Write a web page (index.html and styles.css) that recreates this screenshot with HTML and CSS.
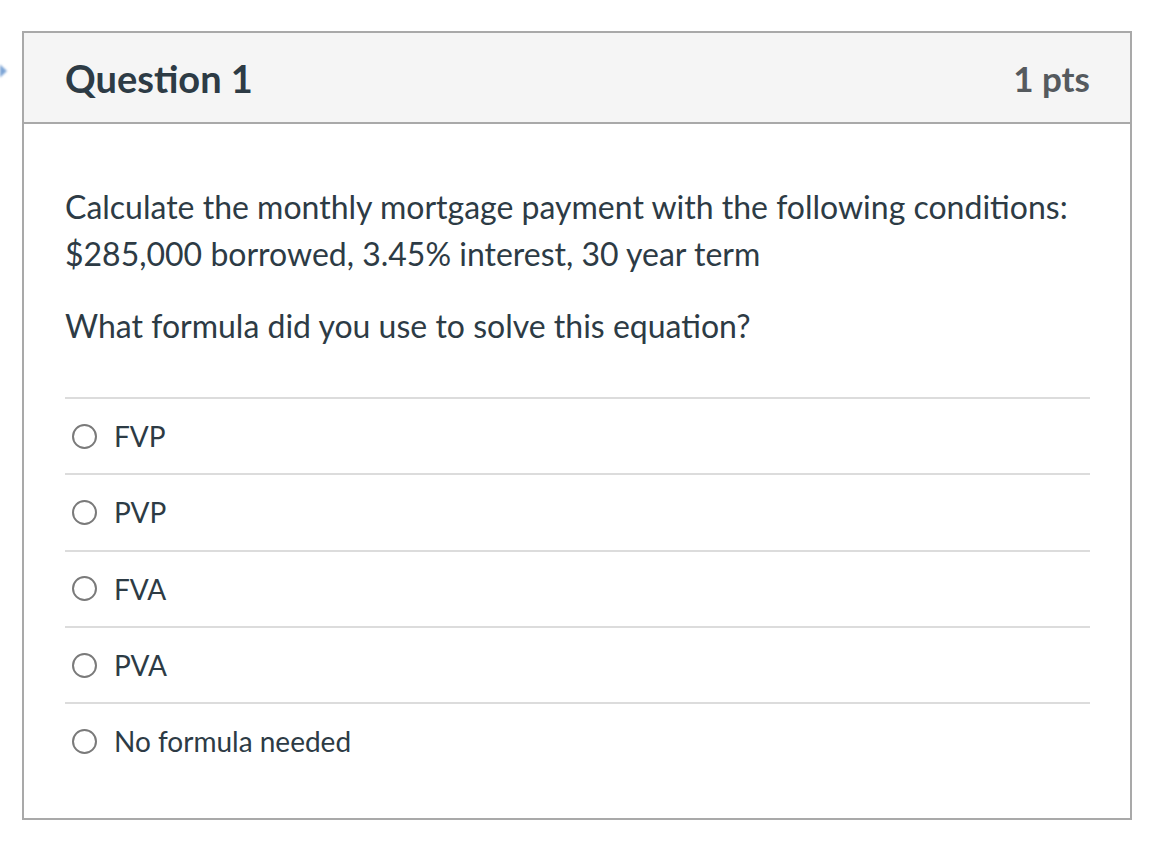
FILE: index.html
```html
<!DOCTYPE html>
<html lang="en">
<head>
<meta charset="utf-8">
<title>Question 1</title>
<link rel="stylesheet" href="styles.css">
</head>
<body>
<div class="page">
  <svg class="flag" width="8" height="26" viewBox="0 0 8 26" aria-hidden="true">
    <path d="M-6 1 L7 13 L-6 25 Z" fill="#7da5d6"/>
  </svg>
  <div class="card">
    <div class="card-header">
      <h2 class="title">Question 1</h2>
      <span class="pts">1 pts</span>
    </div>
    <div class="card-body">
      <p class="q">Calculate the monthly mortgage payment with the following conditions: $285,000 borrowed, 3.45% interest, 30 year term</p>
      <p class="q q2">What formula did you use to solve this equation?</p>
      <div class="answers">
        <label class="answer"><span class="radio"></span><span class="answer-text">FVP</span></label>
        <label class="answer"><span class="radio"></span><span class="answer-text">PVP</span></label>
        <label class="answer"><span class="radio"></span><span class="answer-text">FVA</span></label>
        <label class="answer"><span class="radio"></span><span class="answer-text">PVA</span></label>
        <label class="answer"><span class="radio"></span><span class="answer-text">No formula needed</span></label>
      </div>
    </div>
  </div>
</div>
</body>
</html>
```

FILE: styles.css
```css
html, body {
  margin: 0;
  padding: 0;
  background: #ffffff;
}
body {
  font-family: Lato, "Open Sans", "Liberation Sans", sans-serif;
  color: #2d3b45;
}
.page {
  position: relative;
  padding: 31px 30px 0 22px;
}
.flag {
  position: absolute;
  left: 0;
  top: 58px;
  filter: blur(1px);
}
.card {
  width: 1106px;
  border: 2px solid #a9a9a9;
}
.card-header {
  display: flex;
  align-items: center;
  justify-content: space-between;
  height: 89px;
  padding: 0 40px 0 41px;
  background: #f5f5f5;
  border-bottom: 2px solid #a9a9a9;
}
.title {
  margin: 0;
  font-size: 38px;
  font-weight: 700;
  color: #2d3b45;
}
.pts {
  font-size: 35px;
  font-weight: 700;
  color: #555a5e;
}
.card-body {
  padding: 59px 40px 40px 41px;
}
.q {
  margin: 0;
  font-size: 32px;
  line-height: 47px;
  color: #2d3b45;
}
.q2 {
  margin-top: 25px;
}
.answers {
  margin-top: 48px;
}
.answer {
  display: flex;
  align-items: center;
  height: 74.3px;
  border-top: 2px solid #dcdcdc;
}
.radio {
  width: 25px;
  height: 25px;
  border: 2px solid #7a7a7a;
  border-radius: 50%;
  margin-left: 7px;
  margin-right: 17px;
  box-sizing: border-box;
  flex: none;
}
.answer-text {
  font-size: 28px;
  color: #2d3b45;
}
```
